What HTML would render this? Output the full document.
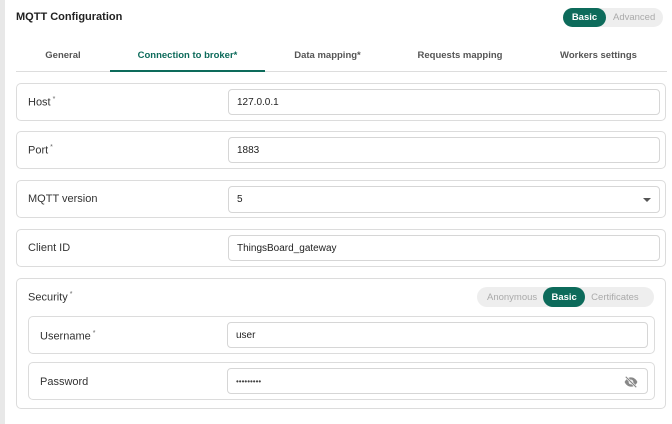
<!DOCTYPE html><html><head><style>
*{box-sizing:border-box;margin:0;padding:0}
body{width:672px;height:424px;background:#fff;font-family:"Liberation Sans",sans-serif;position:relative;overflow:hidden;color:#222}
.a{position:absolute}
.strip{left:0;top:0;width:5px;height:424px;background:#e8e8e8}
.box{position:absolute;border:1px solid #dcdcdc;border-radius:5px}
.inp{position:absolute;border:1px solid #d6d6d6;border-radius:4px;font-size:10px;padding-left:8px;display:flex;align-items:center;color:#222}
.lbl{position:absolute;font-size:11px;color:#333}
.lbl sup{font-size:7px;color:#666}
.tab{position:absolute;top:50px;font-size:9.5px;font-weight:bold;color:#555;text-align:center}
.tog{position:absolute;background:#eee;border-radius:11px;font-size:9.5px;color:#aaa;display:flex;align-items:center}
.on{background:#0d6b5b;color:#fff;font-weight:bold;border-radius:11px;height:100%;display:flex;align-items:center;justify-content:center}
</style></head><body>
<div class="a strip"></div>
<div class="a" style="left:16px;top:11px;font-size:11px;font-weight:bold;color:#222">MQTT Configuration</div>
<div class="tog" style="left:563px;top:8px;width:100px;height:19px"><div class="on" style="width:43px">Basic</div><span style="margin-left:7px">Advanced</span></div>
<div class="tab" style="left:16px;width:94px">General</div>
<div class="tab" style="left:110px;width:155px;color:#0d6b5b">Connection to broker*</div>
<div class="tab" style="left:265px;width:125px">Data mapping*</div>
<div class="tab" style="left:390px;width:140px">Requests mapping</div>
<div class="tab" style="left:530px;width:137px">Workers settings</div>
<div class="a" style="left:16px;top:71px;width:651px;height:1px;background:#ddd"></div>
<div class="a" style="left:110px;top:70px;width:155px;height:2px;background:#0d6b5b"></div>

<div class="box" style="left:16px;top:83px;width:650px;height:38px"></div>
<div class="lbl" style="left:28px;top:96px">Host<sup> *</sup></div>
<div class="inp" style="left:228px;top:89px;width:432px;height:26px">127.0.0.1</div>

<div class="box" style="left:16px;top:131px;width:650px;height:38px"></div>
<div class="lbl" style="left:28px;top:144px">Port<sup> *</sup></div>
<div class="inp" style="left:228px;top:137px;width:432px;height:26px">1883</div>

<div class="box" style="left:16px;top:180px;width:650px;height:38px"></div>
<div class="lbl" style="left:28px;top:193px">MQTT version</div>
<div class="inp" style="left:228px;top:186px;width:432px;height:27px">5<span style="position:absolute;right:8px;top:11px;border-left:4px solid transparent;border-right:4px solid transparent;border-top:4px solid #555"></span></div>

<div class="box" style="left:16px;top:229px;width:650px;height:38px"></div>
<div class="lbl" style="left:28px;top:242px">Client ID</div>
<div class="inp" style="left:228px;top:235px;width:432px;height:26px">ThingsBoard_gateway</div>

<div class="box" style="left:16px;top:278px;width:650px;height:131px"></div>
<div class="lbl" style="left:28px;top:291px">Security<sup> *</sup></div>
<div class="tog" style="left:477px;top:287px;width:177px;height:20px"><span style="margin-left:10px;margin-right:6px">Anonymous</span><div class="on" style="width:42px">Basic</div><span style="margin-left:6px">Certificates</span></div>

<div class="box" style="left:28px;top:316px;width:627px;height:38px"></div>
<div class="lbl" style="left:40px;top:330px">Username<sup> *</sup></div>
<div class="inp" style="left:227px;top:322px;width:421px;height:26px">user</div>

<div class="box" style="left:28px;top:362px;width:627px;height:38px"></div>
<div class="lbl" style="left:40px;top:376px">Password</div>
<div class="inp" style="left:227px;top:368px;width:421px;height:26px;font-size:8px;color:#444">•••••••••
<svg style="position:absolute;right:9px;top:7px" width="14" height="12" viewBox="0 0 24 20"><path d="M1 10C4 4 8 2 12 2s8 2 11 8c-3 6-7 8-11 8S4 16 1 10z" fill="#888"/><circle cx="12" cy="10" r="4" fill="#fff"/><circle cx="12" cy="10" r="2.3" fill="#888"/><path d="M3 1L21 19" stroke="#fff" stroke-width="4"/><path d="M3 1L21 19" stroke="#888" stroke-width="2"/></svg></div>
</body></html>
